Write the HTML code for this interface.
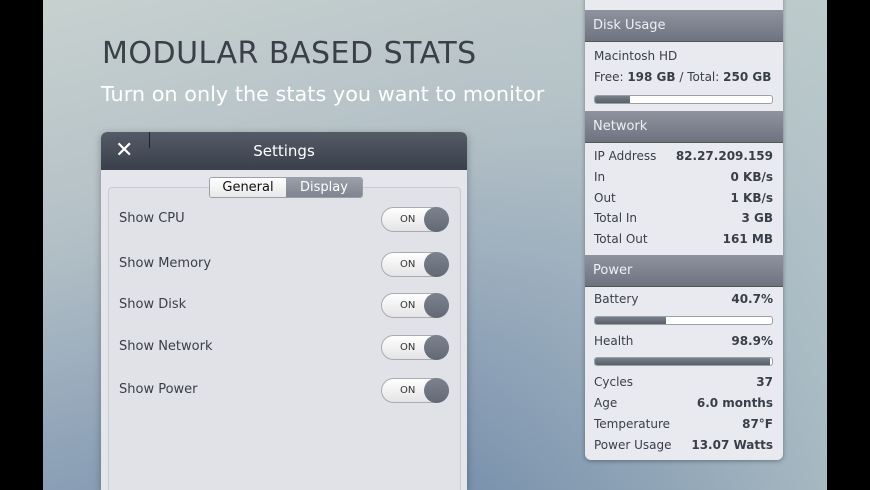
<!DOCTYPE html>
<html><head><style>
*{margin:0;padding:0;box-sizing:border-box}
html,body{width:870px;height:490px;overflow:hidden}
body{background:#000;position:relative;font-family:"DejaVu Sans","Liberation Sans",sans-serif}
#bg{position:absolute;left:43px;top:0;width:784px;height:490px;background:linear-gradient(165deg,#c7d1cf 0%,#b3c0c6 35%,#8fa3b8 65%,#6e88a6 100%)}
#bg2{position:absolute;left:43px;top:0;width:784px;height:490px;background:linear-gradient(90deg,rgba(0,0,0,0) 55%,rgba(190,205,205,.7) 100%)}
h1{position:absolute;left:102px;top:36px;font:30px "DejaVu Sans","Liberation Sans",sans-serif;color:#3a3f48;letter-spacing:.5px;font-weight:normal}
h2{position:absolute;left:101px;top:82px;font:20.8px "DejaVu Sans","Liberation Sans",sans-serif;color:#fff;font-weight:normal}
#win{position:absolute;left:101px;top:132px;width:366px;height:358px;background:#e4e6ec;border-radius:6px 6px 0 0;box-shadow:0 2px 8px rgba(0,0,0,.3);overflow:hidden}
#tb{height:38px;border-radius:6px 6px 0 0;background:linear-gradient(#555b66,#3a404b);color:#fff;text-align:center;font-size:15px;line-height:38px;position:relative}
#tb .x{position:absolute;left:14px;top:0;font-size:22px;font-weight:bold}
#tb .sep{position:absolute;left:48px;top:0;width:1px;height:16px;background:#222}
#grp{position:absolute;left:7px;top:55px;width:353px;height:303px;border:1px solid #c8cbd2;border-bottom:none;border-radius:4px 4px 0 0;background:#e0e2e8}
#tabs{position:absolute;left:108px;top:45px;height:21px;display:flex;border:1px solid #9aa0a8;border-radius:3px;overflow:hidden;font-size:13px}
#tabs div{width:76px;text-align:center;line-height:19px}
.t1{background:linear-gradient(#fff,#e8e8ea);color:#111}
.t2{background:linear-gradient(#9aa0aa,#7f8590);color:#fff}
.row{position:absolute;left:18px;font-size:13px;color:#3a3e46}
.tog{position:absolute;left:280px;width:68px;height:25px;border-radius:13px;background:linear-gradient(#fff,#e4e4e6);border:1px solid #a8acb2;font-size:10px;color:#333;line-height:23px;padding-left:18px}
.tog:after{content:"";position:absolute;right:-1px;top:-1px;width:25px;height:25px;border-radius:50%;background:linear-gradient(#7c828e,#626874)}
#pn{position:absolute;left:585px;top:-6px;width:198px;height:466px;background:#e8eaf0;border-radius:6px;box-shadow:0 1px 5px rgba(0,0,0,.35);overflow:hidden;font-size:12px;color:#3a3e46}
.hd{position:absolute;left:0;width:198px;height:32px;background:linear-gradient(#8e939e,#6e7380);color:#eef0f4;font-size:13px;line-height:32px;padding-left:8px;border-bottom:1px solid #555}
.l{position:absolute;left:9px}
.r{position:absolute;right:10px;font-weight:bold}
.bar{position:absolute;left:9px;width:179px;height:9px;border:1px solid #9aa0a8;border-radius:3px;background:#fff;overflow:hidden}
.bar i{display:block;height:100%;background:linear-gradient(#7a808a,#5a606a)}
</style></head><body>
<div id="bg"></div><div id="bg2"></div>
<h1>MODULAR BASED STATS</h1>
<h2>Turn on only the stats you want to monitor</h2>
<div id="win">
<div id="tb"><span class="x">✕</span><span class="sep"></span>Settings</div>
<div id="grp"></div>
<div id="tabs"><div class="t1">General</div><div class="t2">Display</div></div>
<div class="row" style="top:79px">Show CPU</div><div class="tog" style="top:75px">ON</div>
<div class="row" style="top:124px">Show Memory</div><div class="tog" style="top:120px">ON</div>
<div class="row" style="top:165px">Show Disk</div><div class="tog" style="top:161px">ON</div>
<div class="row" style="top:207px">Show Network</div><div class="tog" style="top:203px">ON</div>
<div class="row" style="top:250px">Show Power</div><div class="tog" style="top:246px">ON</div>
</div>
<div id="pn">
<div class="hd" style="top:16px">Disk Usage</div>
<div class="l" style="top:55px">Macintosh HD</div>
<div class="l" style="top:76px">Free: <b>198 GB</b> / Total: <b>250 GB</b></div>
<div class="bar" style="top:101px"><i style="width:20%"></i></div>
<div class="hd" style="top:117px">Network</div>
<div class="l" style="top:155px">IP Address</div><div class="r" style="top:155px">82.27.209.159</div>
<div class="l" style="top:176px">In</div><div class="r" style="top:176px">0 KB/s</div>
<div class="l" style="top:197px">Out</div><div class="r" style="top:197px">1 KB/s</div>
<div class="l" style="top:217px">Total In</div><div class="r" style="top:217px">3 GB</div>
<div class="l" style="top:238px">Total Out</div><div class="r" style="top:238px">161 MB</div>
<div class="hd" style="top:261px">Power</div>
<div class="l" style="top:298px">Battery</div><div class="r" style="top:298px">40.7%</div>
<div class="bar" style="top:322px"><i style="width:40%"></i></div>
<div class="l" style="top:340px">Health</div><div class="r" style="top:340px">98.9%</div>
<div class="bar" style="top:363px"><i style="width:99%"></i></div>
<div class="l" style="top:381px">Cycles</div><div class="r" style="top:381px">37</div>
<div class="l" style="top:402px">Age</div><div class="r" style="top:402px">6.0 months</div>
<div class="l" style="top:423px">Temperature</div><div class="r" style="top:423px">87°F</div>
<div class="l" style="top:444px">Power Usage</div><div class="r" style="top:444px">13.07 Watts</div>
</div>
</body></html>
